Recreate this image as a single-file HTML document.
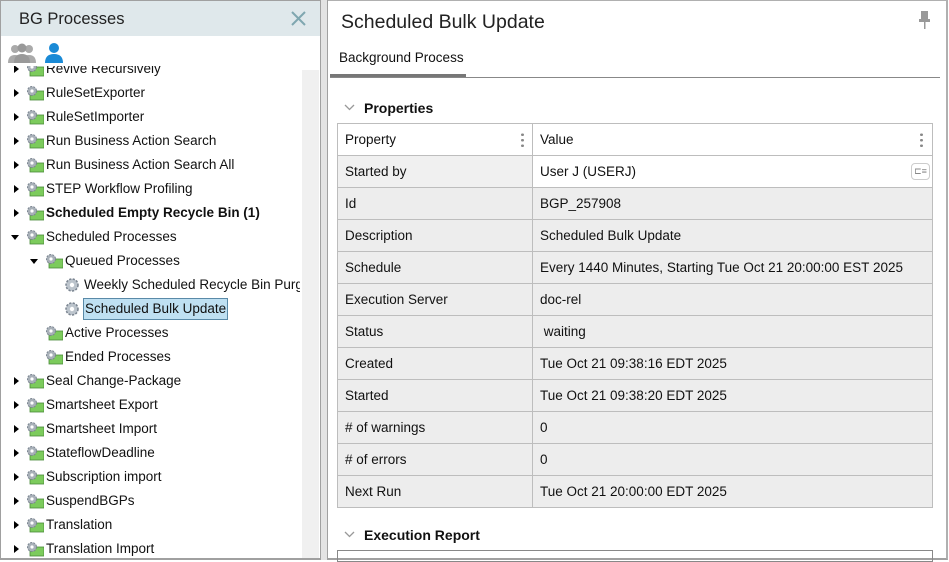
<!DOCTYPE html>
<html><head><style>
*{margin:0;padding:0;box-sizing:border-box}
body{width:949px;height:560px;overflow:hidden;background:#fff;font-family:"Liberation Sans",sans-serif;font-size:13.5px;color:#111;position:relative}
.abs{position:absolute}
.row{position:absolute;height:24px;line-height:24px;white-space:nowrap}
.tri{position:absolute;top:8px;width:0;height:0;border-top:4px solid transparent;border-bottom:4px solid transparent;border-left:5px solid #000}
.tri.d{top:10px;border-left:4px solid transparent;border-right:4px solid transparent;border-top:5px solid #000;border-bottom:0}
.ic{position:absolute;top:4px}
table{border-collapse:collapse;position:absolute;left:337px;top:123px;width:596px}
td{border:1px solid #bdbdbd;height:32px;padding-left:7px;font-size:13.5px}
td:first-child{width:195px}
tr.g td{background:#ededed}
</style></head><body>
<div class="abs" style="left:0;top:0;width:321px;height:560px;border:1px solid #a0a0a0;border-bottom:2px solid #a0a0a0"></div>
<div class="abs" style="left:1px;top:1px;width:319px;height:35px;background:#dfe8eb"></div>
<div class="abs" style="left:19px;top:10px;font-size:16.5px;color:#222">BG Processes</div>
<svg class="abs" style="left:290px;top:10px" width="17" height="17"><path d="M2 2L15 15M15 2L2 15" stroke="#7fa7b0" stroke-width="2"/></svg>
<svg class="abs" style="left:7px;top:42px" width="30" height="22"><circle cx="8" cy="7" r="4" fill="#aaa"/><circle cx="22" cy="7" r="4" fill="#aaa"/><circle cx="15" cy="6" r="4.5" fill="#999"/><path d="M1 21q0-8 7-8t7 8zM15 21q0-8 7-8t7 8z" fill="#aaa"/><path d="M7 21q0-9 8-9t8 9z" fill="#999"/></svg>
<svg class="abs" style="left:44px;top:42px" width="20" height="22"><circle cx="10" cy="6" r="5" fill="#1a8ad6"/><path d="M1 21q0-9 9-9t9 9z" fill="#1a8ad6"/></svg>
<div class="abs" style="left:302px;top:70px;width:17px;height:488px;background:#f0f0f0"></div>
<div class="abs" style="left:321px;top:0;width:7px;height:560px;background:#e3e3e3;border-right:1px solid #a0a0a0"></div>
<div class="abs" style="left:0;top:66px;width:300px;height:492px;overflow:hidden" id="tree"></div>
<div class="abs" style="left:328px;top:0;width:620px;height:560px;border-right:2px solid #b0b0b0;border-bottom:2px solid #a0a0a0;border-top:1px solid #b0b0b0"></div>
<div class="abs" style="left:341px;top:11px;font-size:19.5px;color:#222">Scheduled Bulk Update</div>
<svg class="abs" style="left:918px;top:11px" width="14" height="20"><rect x="3" y="0" width="7" height="9" fill="#999"/><rect x="1" y="8" width="11" height="3" fill="#999"/><rect x="6" y="11" width="1.5" height="7" fill="#999"/></svg>
<div class="abs" style="left:339px;top:50px;font-size:13.5px">Background Process</div>
<div class="abs" style="left:330px;top:77px;width:610px;height:1px;background:#888"></div>
<div class="abs" style="left:330px;top:74px;width:136px;height:3px;background:#777"></div>
<svg class="abs" style="left:344px;top:104px" width="11" height="8"><path d="M1 1l4.5 4.5L10 1" stroke="#999" fill="none" stroke-width="1.3"/></svg>
<div class="abs" style="left:364px;top:100px;font-weight:bold;font-size:14px">Properties</div>
<table>
<tr><td style="position:relative">Property<span style="position:absolute;right:8px;top:8px;width:3px;height:16px;background:radial-gradient(circle,#888 1.3px,transparent 1.5px) 0 0/3px 5.5px"></span></td><td style="position:relative">Value<span style="position:absolute;right:9px;top:8px;width:3px;height:16px;background:radial-gradient(circle,#888 1.3px,transparent 1.5px) 0 0/3px 5.5px"></span></td></tr>
<tr><td style="background:#f0f0f0">Started by</td><td style="position:relative">User J (USERJ)<span style="position:absolute;right:2px;top:7px;width:19px;height:17px;border:1px solid #ccc;border-radius:4px;font-size:9px;color:#888;text-align:center;line-height:15px">⊏≡</span></td></tr>
<tr class="g"><td>Id</td><td>BGP_257908</td></tr>
<tr class="g"><td>Description</td><td>Scheduled Bulk Update</td></tr>
<tr class="g"><td>Schedule</td><td>Every 1440 Minutes, Starting Tue Oct 21 20:00:00 EST 2025</td></tr>
<tr class="g"><td>Execution Server</td><td>doc-rel</td></tr>
<tr class="g"><td>Status</td><td>&nbsp;waiting</td></tr>
<tr class="g"><td>Created</td><td>Tue Oct 21 09:38:16 EDT 2025</td></tr>
<tr class="g"><td>Started</td><td>Tue Oct 21 09:38:20 EDT 2025</td></tr>
<tr class="g"><td># of warnings</td><td>0</td></tr>
<tr class="g"><td># of errors</td><td>0</td></tr>
<tr class="g"><td>Next Run</td><td>Tue Oct 21 20:00:00 EDT 2025</td></tr>
</table>
<svg class="abs" style="left:344px;top:531px" width="11" height="8"><path d="M1 1l4.5 4.5L10 1" stroke="#999" fill="none" stroke-width="1.3"/></svg>
<div class="abs" style="left:364px;top:527px;font-weight:bold;font-size:14px">Execution Report</div>
<div class="abs" style="left:337px;top:550px;width:596px;height:12px;border:1px solid #888"></div>
<script>
var items=[["Revive Recursively",0,"r"],["RuleSetExporter",0,"r"],["RuleSetImporter",0,"r"],["Run Business Action Search",0,"r"],["Run Business Action Search All",0,"r"],["STEP Workflow Profiling",0,"r"],["Scheduled Empty Recycle Bin (1)",0,"r","b"],["Scheduled Processes",0,"d"],["Queued Processes",1,"d"],["Weekly Scheduled Recycle Bin Purg",2,"g"],["Scheduled Bulk Update",2,"g","s"],["Active Processes",1,""],["Ended Processes",1,""],["Seal Change-Package",0,"r"],["Smartsheet Export",0,"r"],["Smartsheet Import",0,"r"],["StateflowDeadline",0,"r"],["Subscription import",0,"r"],["SuspendBGPs",0,"r"],["Translation",0,"r"],["Translation Import",0,"r"]];
var h="",folder='<svg width="18" height="16"><rect x="4" y="6" width="14" height="9" fill="#7ccb5c" stroke="#4a8a3a" stroke-width="0.8"/><circle cx="6" cy="6" r="4.5" fill="#a8b0b8" stroke="#7a8490" stroke-width="1" stroke-dasharray="2 1.2"/><circle cx="6" cy="6" r="1.6" fill="#fff"/></svg>';
var gear='<svg width="16" height="16"><circle cx="8" cy="8" r="6" fill="#bcc4cc" stroke="#7a8490" stroke-width="1.5" stroke-dasharray="2.2 1.4"/><circle cx="8" cy="8" r="2.2" fill="#fff"/></svg>';
items.forEach(function(it,i){var y=i*24-9,l=it[1]*19;var s='<div class="row" style="top:'+y+'px;left:0;width:300px">';
if(it[2]=="r")s+='<div class="tri" style="left:'+(14+l)+'px"></div>';if(it[2]=="d")s+='<div class="tri d" style="left:'+(11+l)+'px"></div>';
var ix=26+l;s+='<div class="ic" style="left:'+ix+'px">'+(it[2]=="g"?gear:folder)+'</div>';
var st='position:absolute;left:'+(ix+20)+'px;';if(it[3]=="b")st+='font-weight:bold;';if(it[3]=="s")st+='background:#bfe0f2;border:1px solid #5a8aa8;line-height:20px;top:1px;padding:0 1px;left:'+(ix+19)+'px;';
s+='<span style="'+st+'">'+it[0]+'</span></div>';h+=s;});
document.getElementById('tree').innerHTML=h;
</script>
</body></html>
